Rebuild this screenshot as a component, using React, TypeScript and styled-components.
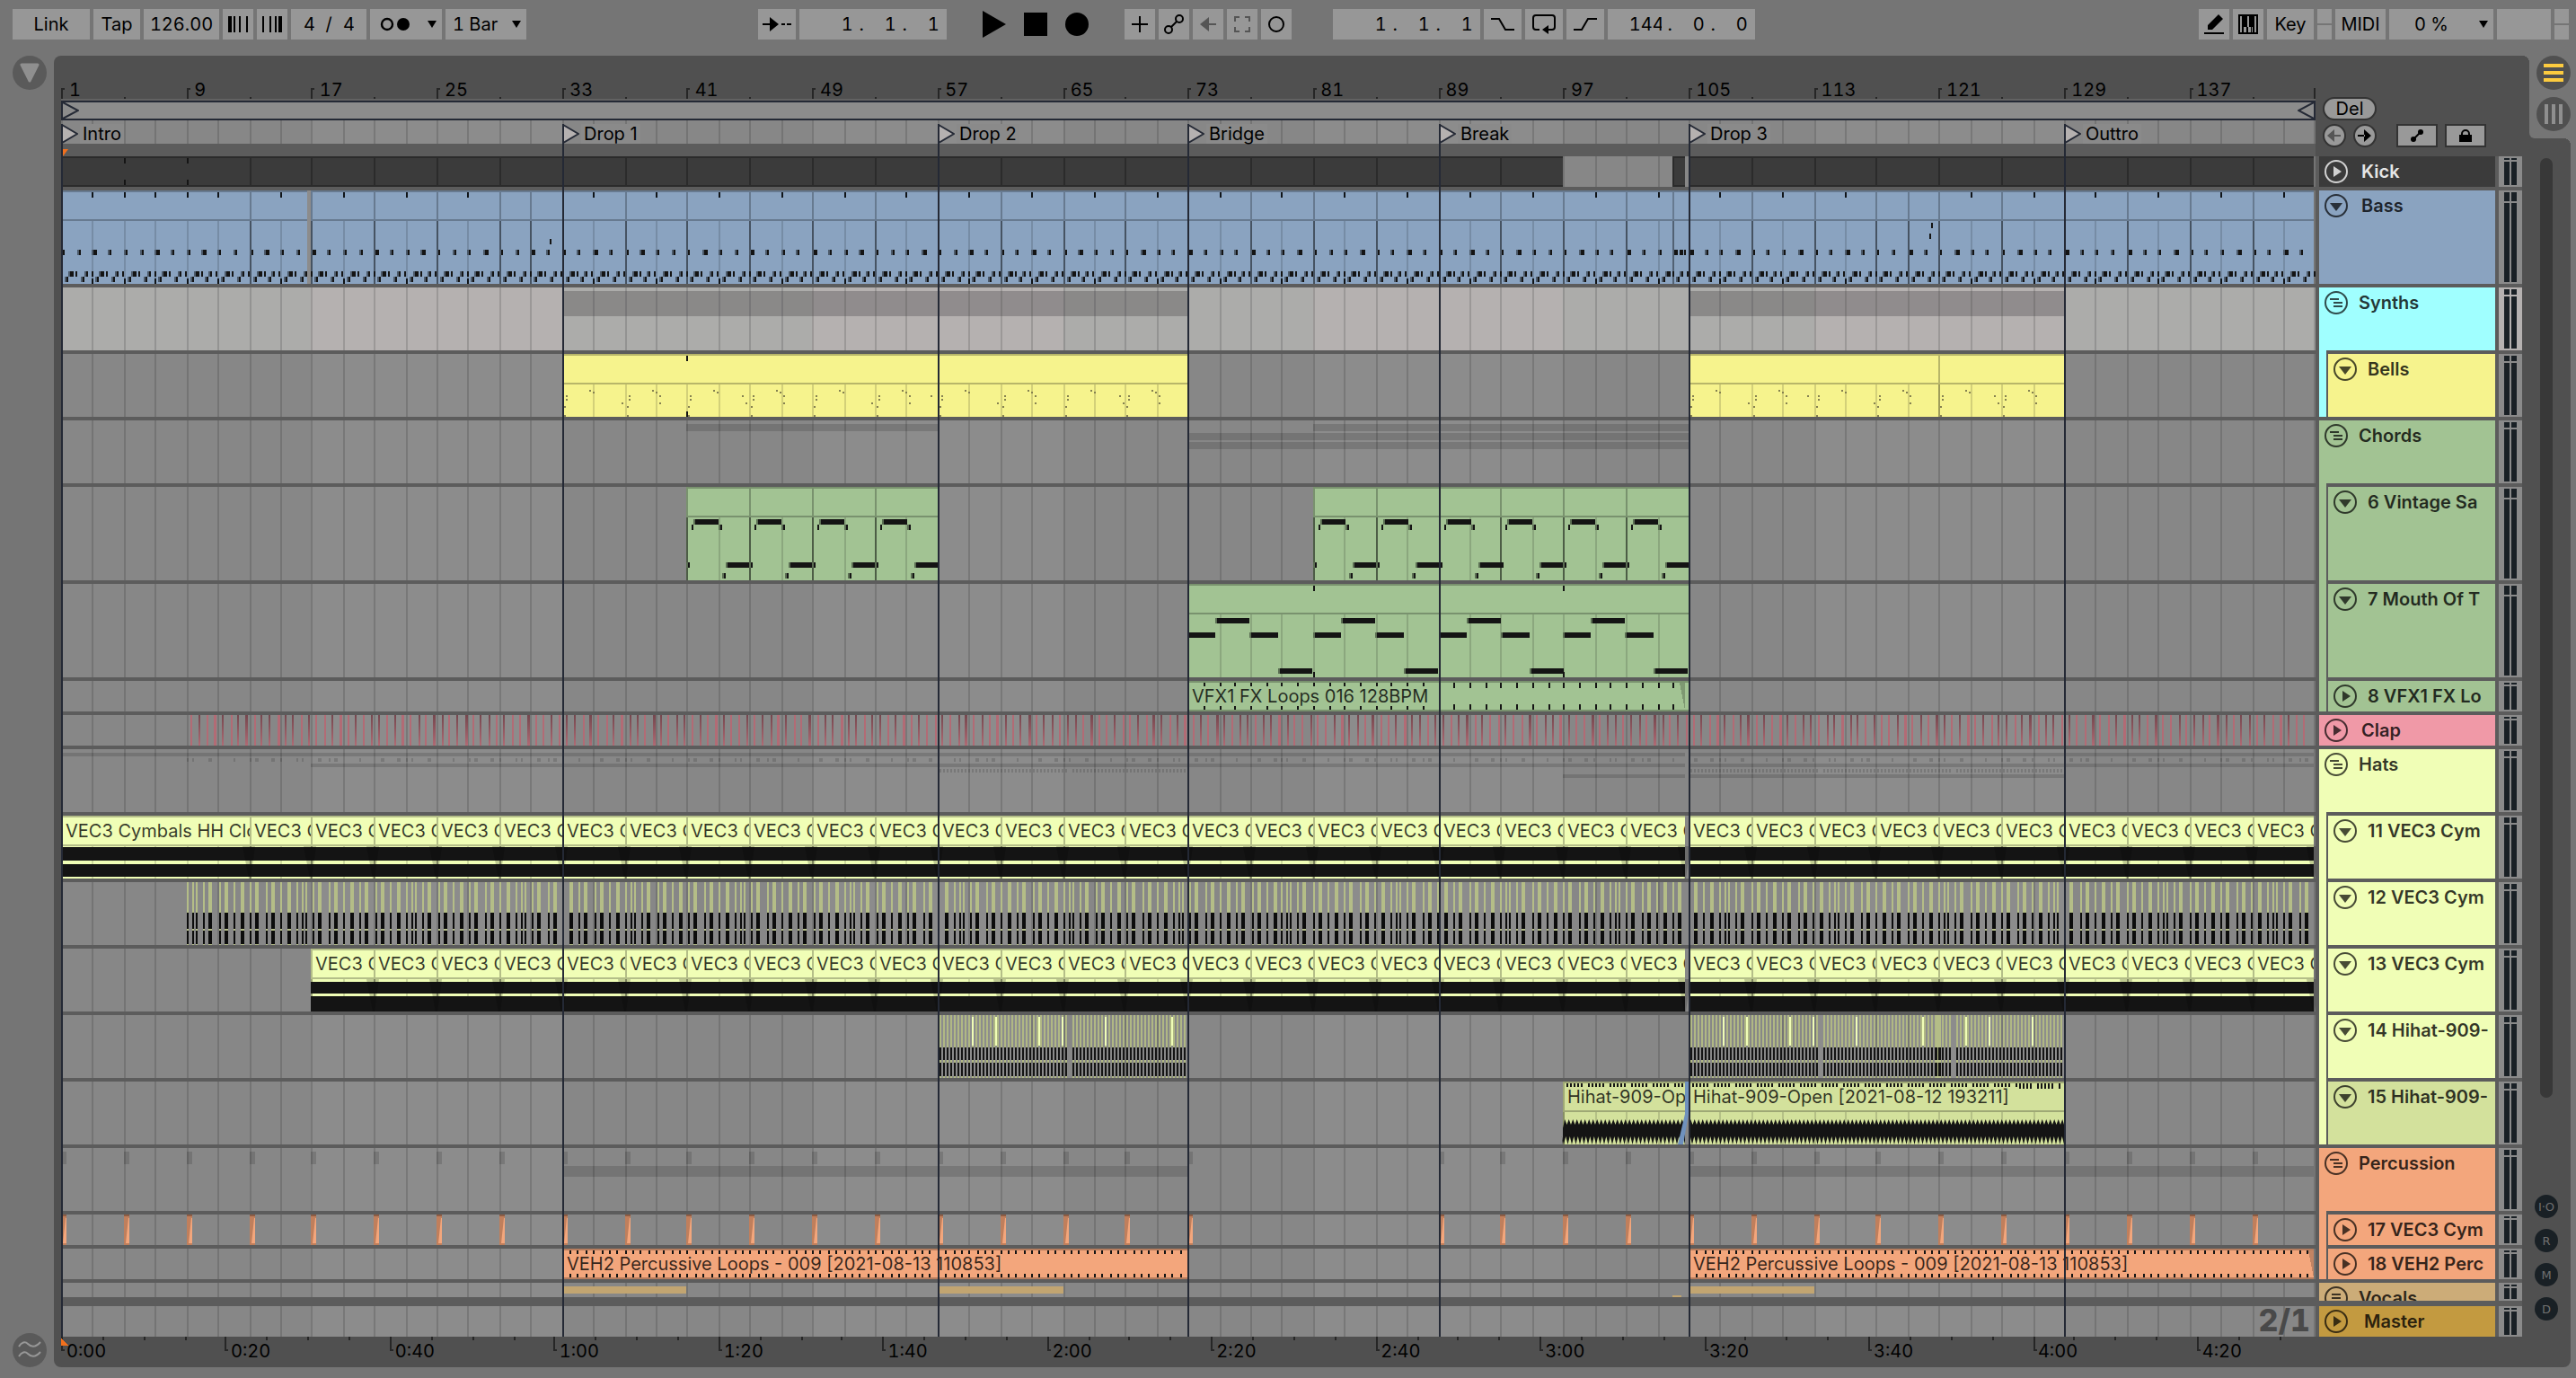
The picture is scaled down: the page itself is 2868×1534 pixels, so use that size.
import React from "react";
import styled, { createGlobalStyle, css } from "styled-components";

/* ---------- palette and metrics ---------- */

const C = {
  chrome: "#757575",
  control: "#979797",
  panel: "#505050",
  gap: "#5c5c5c",
  lane: "#878787",
  laneAlt: "#8c8c8c",
  navy: "#242935",
  ink: "#141414",
  blue: "#8aa3c0",
  cyan: "#a0ffff",
  yellow: "#f6f38d",
  green: "#a2c393",
  pink: "#f099a7",
  lime: "#f0feb6",
  olive: "#d3e19c",
  orange: "#f3a67c",
  tan: "#ccac78",
  gold: "#c39a40",
  dark: "#3b3b3b",
};

const FONT = `"Inter", "Liberation Sans", sans-serif`;
const LANE_W = 2510;
const BAR = 17.422;

/** Timeline x of a bar, on the two-pixel grid that the arrangement uses. */
const snap = (bar: number) => Math.round(((bar - 1) * BAR) / 2) * 2;
const pct = (units: number) => `${(units / LANE_W) * 100}%`;
const range = (from: number, to: number, step: number) => {
  const out: number[] = [];
  for (let v = from; v < to; v += step) out.push(v);
  return out;
};

const GlobalStyle = createGlobalStyle`
  *, *::before, *::after { box-sizing: border-box; }
  body { margin: 0; background: ${C.chrome}; font-family: ${FONT}; font-size: 20px; color: #000; }
  button, input, select { font: inherit; color: inherit; margin: 0; padding: 0; border: 0; border-radius: 0; background: none; }
  svg { display: block; }
`;

/* ---------- toolbar ---------- */

const Shell = styled.div`
  display: flex;
  flex-direction: column;
  min-height: 100vh;
  background: ${C.chrome};
`;

const Toolbar = styled.header`
  display: flex;
  align-items: center;
  padding: 10px 8px 18px 14px;
  font-variant-numeric: tabular-nums;
`;

const Group = styled.div<{ $gap?: number; $before?: number }>`
  display: flex;
  gap: ${(p) => p.$gap ?? 4}px;
  margin-left: ${(p) => p.$before ?? 0}px;
`;

const Spacer = styled.div<{ $grow: number }>`
  flex: ${(p) => p.$grow} 1 0;
`;

const box = css<{ $w: number }>`
  display: flex;
  align-items: center;
  justify-content: center;
  width: ${(p) => p.$w}px;
  height: 34px;
  background: ${C.control};
`;

const ToolButton = styled.button<{ $w: number; $dim?: boolean }>`
  ${box}
  color: ${(p) => (p.$dim ? "#555" : "#000")};
`;

const Transport = styled.button`
  display: flex;
  align-items: center;
  justify-content: center;
  width: 26px;
  height: 34px;
`;

const NumberInput = styled.input<{ $w: number }>`
  ${box}
  text-align: center;
`;

const Field = styled.div<{ $w: number; $end?: boolean }>`
  ${box}
  justify-content: ${(p) => (p.$end ? "flex-end" : "center")};
  padding: 0 8px;
`;

const Part = styled.input<{ $w: number }>`
  width: ${(p) => p.$w}px;
  text-align: right;
`;

const Dot = styled.span`
  width: 12px;
  text-align: right;
`;

const Slash = styled.span`
  width: 32px;
  text-align: center;
`;

const SelectBox = styled.label<{ $w: number }>`
  ${box}
  justify-content: flex-start;
  padding-right: 6px;
`;

const Select = styled.select<{ $indent: number }>`
  appearance: none;
  flex: 1;
  min-width: 0;
  height: 34px;
  padding-left: ${(p) => p.$indent}px;
`;

const Lamp = styled.div`
  display: flex;
  flex-direction: column;
  gap: 2px;
  & > i { width: 16px; height: 16px; background: ${C.control}; }
`;

const Down = () => (
  <svg width="10" height="8" viewBox="0 0 10 8"><path d="M0 0H10L5 8Z" /></svg>
);

const Position = ({ label, parts }: { label: string; parts: string[] }) => (
  <Field $w={164} $end>
    {parts.map((p, i) => (
      <React.Fragment key={i}>
        <Part $w={36} defaultValue={p} aria-label={`${label} ${i + 1}`} />
        {i < 2 && <Dot>.</Dot>}
      </React.Fragment>
    ))}
  </Field>
);

const stroke = { fill: "none", stroke: "currentColor", strokeWidth: 2 } as const;

const TopBar = () => (
  <Toolbar>
    <Group>
      <ToolButton $w={86}>Link</ToolButton>
      <ToolButton $w={52}>Tap</ToolButton>
      <NumberInput $w={84} defaultValue="126.00" aria-label="Tempo" />
      <ToolButton $w={34} aria-label="Nudge down">
        <svg width="22" height="18" shapeRendering="crispEdges"><path d="M0 0h4v18H0zM6 0h2v18H6zM12 0h2v18h-2zM20 0h2v18h-2z" /></svg>
      </ToolButton>
      <ToolButton $w={34} aria-label="Nudge up">
        <svg width="22" height="18" shapeRendering="crispEdges"><path d="M0 0h2v18H0zM8 0h2v18H8zM14 0h2v18h-2zM18 0h4v18h-4z" /></svg>
      </ToolButton>
      <Field $w={84}>
        <Part $w={12} defaultValue="4" aria-label="Beats" />
        <Slash>/</Slash>
        <Part $w={12} defaultValue="4" aria-label="Beat unit" />
      </Field>
      <ToolButton $w={80} aria-label="Metronome">
        <svg width="68" height="20" viewBox="0 0 68 20">
          <circle cx="13" cy="10" r="6" {...stroke} strokeWidth="2.4" />
          <circle cx="31" cy="10" r="7" />
          <path d="M58 6h10l-5 8z" />
        </svg>
      </ToolButton>
      <SelectBox $w={90}>
        <Select $indent={8} defaultValue="1 Bar" aria-label="Quantization"><option>1 Bar</option></Select>
        <Down />
      </SelectBox>
    </Group>

    <Spacer $grow={12} />

    <Group>
      <ToolButton $w={42} aria-label="Follow">
        <svg width="32" height="16" viewBox="0 0 32 16">
          <path d="M0 7h9v2H0zM8 0l10 8-10 8zM21 7h4v2h-4zM27 7h5v2h-5z" />
        </svg>
      </ToolButton>
      <Position label="Position" parts={["1", "1", "1"]} />
    </Group>
    <Group $gap={20} $before={40}>
      <Transport aria-label="Play"><svg width="26" height="30"><path d="M0 0L26 15L0 30Z" /></svg></Transport>
      <Transport aria-label="Stop"><svg width="26" height="26"><rect width="26" height="26" /></svg></Transport>
      <Transport aria-label="Record"><svg width="26" height="26"><circle cx="13" cy="13" r="13" /></svg></Transport>
    </Group>
    <Group $before={40}>
      <ToolButton $w={34} aria-label="Overdub">
        <svg width="18" height="18" {...stroke}><path d="M9 0v18M0 9h18" /></svg>
      </ToolButton>
      <ToolButton $w={34} aria-label="Automation arm">
        <svg width="22" height="24" viewBox="0 0 22 24" {...stroke}>
          <circle cx="5" cy="18" r="4" /><circle cx="17" cy="6" r="4" /><path d="M8 15l6-6" />
        </svg>
      </ToolButton>
      <ToolButton $w={34} $dim aria-label="Re-enable automation">
        <svg width="18" height="16" fill="currentColor"><path d="M0 8L10 0V16ZM8 7h10v2H8z" /></svg>
      </ToolButton>
      <ToolButton $w={34} $dim aria-label="Capture">
        <svg width="18" height="18" {...stroke}><path d="M1 6V1h5M12 1h5v5M17 12v5h-5M6 17H1v-5" /></svg>
      </ToolButton>
      <ToolButton $w={34} aria-label="Session record">
        <svg width="20" height="20" {...stroke}><circle cx="10" cy="10" r="8" /></svg>
      </ToolButton>
    </Group>
    <Group $before={46}>
      <Position label="Loop start" parts={["1", "1", "1"]} />
      <ToolButton $w={42} aria-label="Punch in">
        <svg width="26" height="16" {...stroke}><path d="M0 2h9l7 12h10" /></svg>
      </ToolButton>
      <ToolButton $w={42} aria-label="Loop">
        <svg width="26" height="24" viewBox="0 0 26 24">
          <path d="M8 18H4a3 3 0 0 1-3-3V5a3 3 0 0 1 3-3h18a3 3 0 0 1 3 3v10a3 3 0 0 1-3 3h-5" {...stroke} />
          <path d="M11 18l7-5v10z" />
        </svg>
      </ToolButton>
      <ToolButton $w={42} aria-label="Punch out">
        <svg width="26" height="16" {...stroke}><path d="M0 14h9l7-12h10" /></svg>
      </ToolButton>
      <Position label="Loop length" parts={["144", "0", "0"]} />
    </Group>

    <Spacer $grow={23} />

    <Group>
      <ToolButton $w={34} aria-label="Draw mode">
        <svg width="22" height="24" viewBox="0 0 22 24"><path d="M4 18V13L16 1l5 5L9 18zM0 21h22v2H0z" /></svg>
      </ToolButton>
      <ToolButton $w={34} aria-label="Computer MIDI keyboard">
        <svg width="22" height="22" shapeRendering="crispEdges">
          <path d="M0 0h22v22H0z" />
          <path fill={C.control} d="M2 2h2v18H2zM18 2h2v18h-2zM6 14h3v6H6zM8 14h1v6H8zM11 14h3v6h-3zM15 14h1v6h-1zM10 2h2v12h-2z" />
        </svg>
      </ToolButton>
      <ToolButton $w={52}>Key</ToolButton>
      <Lamp><i /><i /></Lamp>
      <ToolButton $w={56}>MIDI</ToolButton>
      <SelectBox $w={116}>
        <Select $indent={28} defaultValue="0 %" aria-label="CPU load"><option>0 %</option></Select>
        <Down />
      </SelectBox>
      <ToolButton $w={60} aria-label="Disk overload" />
      <Lamp><i /><i /></Lamp>
    </Group>
  </Toolbar>
);

/* ---------- lanes ---------- */

const Rail = styled.aside`
  display: flex;
  flex-direction: column;
  justify-content: space-between;
  flex: none;
  width: 60px;
  padding-left: 14px;
`;

const Round = styled.button<{ $bg: string; $size: number }>`
  display: flex;
  align-items: center;
  justify-content: center;
  width: ${(p) => p.$size}px;
  height: ${(p) => p.$size}px;
  border-radius: 50%;
  background: ${(p) => p.$bg};
`;

const Workspace = styled.main`
  display: flex;
  padding-right: 6px;
`;

const Panel = styled.section`
  position: relative;
  display: flex;
  flex: 1;
  min-width: 0;
  padding-left: 8px;
  border-radius: 8px;
  background: ${C.panel};
`;

const Arrangement = styled.div`
  position: relative;
  flex: 1;
  min-width: 0;
  overflow: hidden;
`;

const Ruler = styled.div`
  position: relative;
  display: flex;
  height: 50px;
  padding: 26px 2px 0 0;
  border-bottom: 2px solid #626262;
  font-variant-numeric: tabular-nums;
`;

const Ticks = styled.svg`
  position: absolute;
  left: 0;
  bottom: 0;
  width: 100%;
`;

const RulerLabel = styled.span`
  flex: 1 1 0;
  padding-left: 9px;
  line-height: 24px;
`;

const LoopBrace = styled.div`
  display: flex;
  justify-content: space-between;
  height: 22px;
  border: 2px solid ${C.navy};
  background: ${C.laneAlt};
`;

const LocatorStrip = styled.div`
  position: relative;
  height: 26px;
  background: ${C.lane};
`;

const Scrub = styled.div`
  height: 14px;
  padding: 6px 0 0 2px;
  background: ${C.gap};
`;

const Locator = styled.button`
  position: absolute;
  top: 4px;
  display: flex;
  align-items: center;
  height: 22px;
`;

const LocatorName = styled.span`
  margin-left: 2px;
  padding: 0 3px;
  line-height: 22px;
  background: #8a8a8a;
`;

const LocatorLine = styled.i`
  position: absolute;
  top: 76px;
  bottom: 34px;
  width: 2px;
  background: ${C.navy};
  pointer-events: none;
`;

const Lanes = styled.div`
  display: flex;
  flex-direction: column;
  gap: 4px;
  background: ${C.gap};
`;

const LaneBox = styled.div<{ $h: number; $before?: number }>`
  position: relative;
  height: ${(p) => p.$h}px;
  margin-top: ${(p) => p.$before ?? 0}px;
  overflow: hidden;
`;

const Layer = styled.svg`
  position: absolute;
  inset: 0;
  width: 100%;
  height: 100%;
`;

const ClipBox = styled.div<{ $color: string; $slim?: boolean; $edge: string }>`
  position: absolute;
  top: 0;
  bottom: 0;
  overflow: hidden;
  border: 0 solid ${(p) => p.$edge};
  border-top-width: 2px;
  border-left-width: 2px;
  border-bottom-width: ${(p) => (p.$slim ? 2 : 0)}px;
  background: ${(p) => p.$color};
`;

const ClipTitle = styled.div<{ $edge: string; $slim?: boolean }>`
  height: 32px;
  padding-left: 3px;
  border-bottom: ${(p) => (p.$slim ? 0 : 2)}px solid ${(p) => p.$edge};
  line-height: 31px;
  overflow: hidden;
  white-space: nowrap;
  color: rgba(0, 0, 0, 0.78);
`;

const Overview = styled.span`
  position: absolute;
  right: 6px;
  top: 0;
  line-height: 32px;
  font-size: 34px;
  font-weight: 800;
  font-variant-numeric: tabular-nums;
  color: #494949;
`;

type Clip = { from: number; to: number; name?: string };
type LaneSpec = {
  height: number;
  before?: number;
  light?: boolean;
  color?: string;
  edge?: string;
  slim?: boolean;
  clips?: Clip[];
  draw?: React.ReactNode;
  note?: string;
};

const Bands = ({ light }: { light?: boolean }) => (
  <Layer viewBox={`0 0 ${LANE_W} 10`} preserveAspectRatio="none" shapeRendering="crispEdges" aria-hidden>
    {range(1, 145, 16).map((b, i) => (
      <rect key={b} x={snap(b)} width={LANE_W - snap(b)} height="10"
        fill={light ? (i % 2 ? "#b5b1b0" : "#acacaa") : i % 2 ? C.laneAlt : C.lane} />
    ))}
  </Layer>
);

const GRID = range(1, 146, 2);

const Lane = ({ spec }: { spec: LaneSpec }) => {
  const { height, clips = [], slim } = spec;
  const edge = spec.edge ?? "rgba(0,0,0,0.25)";
  return (
    <LaneBox $h={height} $before={spec.before}>
      <Bands light={spec.light} />
      {clips.map((c, i) => (
        <ClipBox key={i} $color={spec.color!} $slim={slim} $edge={edge}
          style={{ left: pct(snap(c.from)), width: pct(snap(c.to) - snap(c.from)) }}>
          <ClipTitle $edge={edge} $slim={slim}>{c.name}</ClipTitle>
        </ClipBox>
      ))}
      <Layer viewBox={`0 0 ${LANE_W} ${height}`} preserveAspectRatio="none" shapeRendering="crispEdges" aria-hidden>
        {GRID.map((b) => {
          const inside = clips.some((c) => b >= c.from && b < c.to);
          if (inside && slim) return null;
          return <rect key={b} x={snap(b)} y={inside ? 34 : 0} width="2" height={height} fill="rgba(0,0,0,0.14)" />;
        })}
        {spec.draw}
      </Layer>
      {spec.note && <Overview>{spec.note}</Overview>}
    </LaneBox>
  );
};

/* ---------- lane contents ---------- */

const SHADE = "rgba(0,0,0,0.14)";

type R = [x: number, y: number, w: number, h: number];
const Rects = ({ items, fill }: { items: R[]; fill: string }) => (
  <path fill={fill} d={items.map(([x, y, w, h]) => `M${x} ${y}h${w}v${h}h${-w}z`).join("")} />
);

const split = (starts: number[], end: number): Clip[] =>
  starts.map((s, i) => ({ from: s, to: starts[i + 1] ?? end }));

/* Kick */
const kickClips: Clip[] = [
  { from: 1, to: 13 },
  ...split(range(13, 97, 4), 97),
  { from: 104, to: 104.8 },
  ...split(range(105, 145, 4), 145),
];
const kickDraw = (
  <Rects fill="#151515" items={[5, 9].flatMap((b): R[] => [[snap(b), 2, 2, 6], [snap(b), 26, 2, 6]])} />
);

/* Bass */
const bassStarts = [1, ...range(13, 29, 4), 29, 31, ...range(33, 104, 4), 104, ...range(105, 119, 4), 119, ...range(121, 145, 4)];
const bassTicks = [3, 5, 7, 9, 11, ...range(15, 145, 4)].filter((b) => b !== 31 && b !== 119);
const bassNotes: R[] = [];
const bassShadow: R[] = [];
for (let b = 0; b < 144; b++) {
  const x = Math.round((b * BAR) / 2) * 2 + 2;
  const wide = b % 7 === 2 || b % 7 === 6;
  if (b !== 103) {
    bassShadow.push([x - 2, 66, 2, 6]);
    bassNotes.push([x, 66, wide ? 4 : 2, 6]);
  }
  bassShadow.push([x + 2, 96, 2, 6], [x + 6, 90, 2, 6]);
  bassNotes.push([x + 4, 96, 2, 6], [x + 8, 90, b % 2 ? 2 : 4, 6], [x + 14, 90, 2, 6]);
}
bassNotes.push([544, 54, 2, 6], [2080, 48, 2, 6], [2082, 36, 2, 6]);
bassNotes.push([1796, 66, 4, 6], [1802, 66, 4, 6], [1807, 66, 2, 6]);
const bassDraw = (
  <>
    <Rects fill={C.laneAlt} items={[[274, 0, 4, 104]]} />
    <Rects fill="rgba(0,0,0,0.2)" items={bassStarts.map((b): R => [snap(b), 34, 2, 70])} />
    <Rects fill="#4d5b6b" items={bassShadow} />
    <Rects fill={C.ink} items={bassNotes} />
    <Rects fill="#101418" items={bassTicks.flatMap((b): R[] => [[snap(b), 2, 2, 6], [snap(b), 98, 2, 6]])} />
  </>
);

/* Bells */
const bellNotes: R[] = [];
[...range(33, 73, 4), ...range(105, 129, 4)].forEach((b, i) => {
  const x = snap(b);
  const pts = [[2, 58], [2, 68], [4, 46], [4, 50], [30, 40], [34, 42], ...(i % 2 ? [[38, 46], [38, 54]] : [[66, 54]])];
  if (i % 3 === 2) pts.push([62, 46]);
  pts.forEach(([dx, y]) => bellNotes.push([x + dx, y, 2, 2]));
});
const bellDraw = (
  <>
    <Rects fill="#858150" items={bellNotes} />
    <Rects fill={C.ink} items={[[snap(41), 2, 2, 6], [snap(41), 64, 2, 6]]} />
  </>
);

/* Chords */
const vintageStarts = [...range(41, 57, 4), ...range(81, 105, 4)];
const vintageNotes: R[] = [];
const vintageShadow: R[] = [];
vintageStarts.forEach((b) => {
  const x = snap(b);
  vintageShadow.push([x + 8, 36, 2, 6], [x + 36, 42, 2, 6], [x + 44, 84, 2, 6], [x + 40, 96, 2, 6], [x, 84, 4, 6]);
  vintageNotes.push([x + 10, 36, 26, 6], [x + 6, 42, 2, 6], [x + 38, 42, 2, 6], [x + 46, 84, 24, 6], [x + 42, 96, 2, 6], [x + 2, 84, 2, 6]);
});
const vintageDraw = (
  <>
    <Rects fill="rgba(0,0,0,0.25)" items={vintageStarts.map((b): R => [snap(b), 34, 2, 70])} />
    <Rects fill="#5b6e53" items={vintageShadow} />
    <Rects fill={C.ink} items={vintageNotes} />
  </>
);

const mouthNotes: R[] = [];
const mouthShadow: R[] = [];
range(73, 105, 8).forEach((b) => {
  const x = snap(b);
  mouthNotes.push([x + 2, 54, 29, 6], [x + 33, 38, 36, 6], [x + 71, 54, 30, 6], [x + 103, 94, 36, 6]);
  mouthShadow.push([x, 54, 2, 6], [x + 31, 38, 2, 6], [x + 69, 54, 2, 6], [x + 101, 94, 2, 6]);
});
const mouthDraw = (
  <>
    <Rects fill="#5b6e53" items={mouthShadow} />
    <Rects fill={C.ink} items={mouthNotes} />
    <Rects fill={C.ink} items={[81, 97].flatMap((b): R[] => [[snap(b), 2, 2, 6], [snap(b), 98, 2, 6]])} />
  </>
);

const fxDraw = (
  <>
    <Rects fill={C.ink} items={range(74, 105, 1).filter((b) => b !== 89).flatMap((b): R[] => {
      const h = b < 89 ? 4 : 6;
      return [[snap(b), 2, 2, h], [snap(b), 32 - h, 2, h]];
    })} />
    <path d="M1802 2L1808 32V2Z" fill="rgba(0,0,0,0.22)" />
  </>
);

/* Clap */
const clapLight: R[] = [];
const clapDark: R[] = [];
const CLAP = "LDLLDLDDLDDLDDLDLLDLLDLDD";
for (let i = 0; i < 271; i++) {
  const x = 144 + i * (BAR / 2) + (i % 3 === 2 ? 1 : 0);
  const r: R = [Math.round(x), 0, i % 8 === 3 || i % 12 === 7 ? 3 : 2, 34];
  (CLAP[i % CLAP.length] === "L" ? clapLight : clapDark).push(r);
}
const clapDraw = (
  <>
    <defs>
      <linearGradient id="clap" gradientUnits="userSpaceOnUse" x1="0" y1="0" x2="0" y2="34">
        <stop offset="0" stopColor="#74474e" />
        <stop offset="1" stopColor="#b06a74" />
      </linearGradient>
    </defs>
    <Rects fill="#b26b75" items={clapLight} />
    <Rects fill="url(#clap)" items={clapDark} />
  </>
);

/* Hats: the hit pattern repeats every fourteen bars */
const HITS: [number, boolean][] = [
  [0, false], [6, false], [10, false], [18, false], [24, true], [36, false], [42, true], [52, false], [60, true],
  [70, false], [76, true], [88, false], [94, true], [104, false], [112, true], [122, false], [128, false], [132, false],
  [140, false], [146, true], [158, false], [164, true], [174, false], [182, true], [192, false], [198, true],
  [210, false], [216, true], [226, false], [234, true],
];
const hits: { x: number; w: number; i: number }[] = [];
range(9, 145, 14).forEach((b) => HITS.forEach(([dx, wide], i) => {
  const x = snap(b) + dx;
  if (x < snap(145) - 6) hits.push({ x, w: wide ? 4 : 2, i });
}));
const openSpans = [[57, 73], [105, 129]];
const openStripes = openSpans.flatMap(([a, b]) =>
  range(snap(a) + 2, snap(b) - 1, 4).filter((x) => (x - snap(a)) % 74 < 71));
const hatsDraw = (
  <>
    <Rects fill={SHADE} items={[[0, 4, snap(104.8), 4], [snap(105), 4, 2508 - snap(105), 4], [snap(17), 16, snap(104.8) - snap(17), 4], [snap(105), 16, 2508 - snap(105), 4]]} />
    <Rects fill={SHADE} items={hits.filter((h) => [0, 1, 4, 7, 9, 10, 12, 13, 15, 16, 19].includes(h.i % 20)).map((h): R => [h.x, 10, h.w, 4])} />
    <Rects fill={SHADE} items={openStripes.map((x): R => [x, 22, 2, 4])} />
    <Rects fill={SHADE} items={[[snap(97), 28, snap(104.8) - snap(97), 4], [snap(105), 28, snap(129) - snap(105), 4]]} />
  </>
);

const cymbalClips = (first: Clip[], from: number): Clip[] => [
  ...first,
  ...split(range(from, 105, 4), 104.8),
  ...split(range(105, 145, 4), 145),
].map((c) => ({ ...c, name: c.to - c.from > 4 ? "VEC3 Cymbals HH Clo" : "VEC3 C" }));

const Wave = ({ clips, bands }: { clips: Clip[]; bands: [number, number][] }) => (
  <>
    <Rects fill={C.ink} items={clips.flatMap((c) => bands.map(([y, h]): R => [snap(c.from), y, snap(c.to) - snap(c.from), h]))} />
    <path fill="rgba(0,0,0,0.2)" shapeRendering="auto"
      d={clips.map((c) => `M${snap(c.to) - 8} 34H${snap(c.to) + 6}L${snap(c.to) + 1} 70h-2z`).join("")} />
  </>
);
const cymbal11 = cymbalClips([{ from: 1, to: 13 }], 13);
const cymbal13 = cymbalClips([], 17);

const hats12 = (
  <>
    <Rects fill="#b4bd87" items={hits.map((h): R => [h.x, 0, h.w, 70])} />
    <Rects fill="#0c0c0c" items={hits.flatMap((h): R[] => [[h.x, 34, h.w, 18], [h.x, 54, h.w, 15]])} />
  </>
);

const brightAt = [38, 64, 112, 138, 186, 260, 308, 334, 382];
const bright = openSpans.flatMap(([a, b]) => brightAt.filter((d) => d < snap(b) - snap(a)).map((d) => snap(a) + d));
const hats14 = (
  <>
    <Rects fill="#b0b884" items={openStripes.map((x): R => [x, 0, 2, 70])} />
    <Rects fill="#b4bd87" items={[[snap(105) + 275, 0, 6, 70]]} />
    <Rects fill={C.ink} items={[...openStripes, snap(105) + 275, snap(105) + 279].flatMap((x): R[] => [[x, 36, 2, 14], [x, 53, 2, 15]])} />
    <Rects fill={C.lime} items={bright.map((x): R => [x, 2, 2, 32])} />
  </>
);

const open15: Clip[] = [
  { from: 97, to: 104.8, name: "Hihat-909-Op" },
  { from: 105, to: 129, name: "Hihat-909-Open [2021-08-12 193211]" },
];
const teeth = (a: number, b: number) => {
  let d = `M${a} 52`;
  for (let x = a; x < b; x += 4.5) d += `L${x + 2.2} 42L${Math.min(x + 4.5, b)} 48`;
  d += `V70`;
  for (let x = b; x > a; x -= 4.5) d += `L${x - 2.2} 61L${Math.max(x - 4.5, a)} 70`;
  return d + "Z";
};
const hats15 = (
  <>
    <Rects fill={C.ink} items={open15.flatMap((c) => range(snap(c.from) + 4, snap(c.to) - 2, 4)
      .filter((_, i) => i % 6 !== 5).map((x): R => [x, 2, 2, x > snap(126) ? 6 : 4]))} />
    {open15.map((c) => (
      <path key={c.from} d={teeth(snap(c.from), snap(c.to))} fill={C.ink} shapeRendering="auto" />
    ))}
    <path d="M1808 0h4V36L1806 70h-6L1808 36Z" fill="#6f91bd" shapeRendering="auto" />
  </>
);

/* Percussion */
const percBars = [...range(1, 74, 4), ...range(89, 145, 4)];
const percDraw = (
  <>
    <Rects fill={SHADE} items={percBars.map((b): R => [snap(b), 4, 6, 14])} />
    <Rects fill={SHADE} items={[[snap(33), 20, snap(73) - snap(33), 12], [snap(105), 20, snap(145) - snap(105), 12]]} />
  </>
);
const perc17 = (
  <>
    <Rects fill="#c07f5c" items={percBars.map((b): R => [snap(b), 0, 6, 34])} />
    <path fill={C.orange} shapeRendering="auto" d={percBars.map((b) => `M${snap(b) + 5} 4h1v28h-4z`).join("")} />
    <Rects fill="#8d5d44" items={percBars.map((b): R => [snap(b), 0, 6, 2])} />
  </>
);
const percClips: Clip[] = [
  { from: 33, to: 73, name: "VEH2 Percussive Loops - 009 [2021-08-13 110853]" },
  { from: 105, to: 145, name: "VEH2 Percussive Loops - 009 [2021-08-13 110853]" },
];
const perc18 = (
  <>
    <Rects fill={C.ink} items={percClips.flatMap((c) => range(c.from + 0.5, c.to, 0.5)
      .flatMap((b): R[] => [[snap(b), 2, 2, 4], [snap(b), 28, 2, 4]]))} />
    <path d="M2502 2L2508 32V2Z" fill="rgba(0,0,0,0.2)" />
  </>
);
const vocalsDraw = (
  <Rects fill="#c2a571" items={[...[33, 57, 105].map((b): R => [snap(b), 4, snap(b + 8) - snap(b), 8]), [1794, 14, 10, 2]]} />
);

const LANES: LaneSpec[] = [
  { height: 34, color: C.dark, edge: "#2b2b2b", slim: true, clips: kickClips, draw: kickDraw },
  { height: 104, color: C.blue, clips: split(bassStarts, 145), draw: bassDraw },
  { height: 70, light: true, draw: <Rects fill="rgba(60,55,60,0.3)" items={[[snap(33), 4, snap(73) - snap(33), 28], [snap(105), 4, snap(129) - snap(105), 28]]} /> },
  { height: 70, color: C.yellow, clips: [{ from: 33, to: 73 }, { from: 105, to: 121 }, { from: 121, to: 129 }], draw: bellDraw },
  { height: 70, draw: <Rects fill={SHADE} items={[
    [snap(41), 4, snap(57) - snap(41), 8], [snap(81), 4, snap(105) - snap(81), 8],
    [snap(73), 14, snap(105) - snap(73), 8], [snap(73), 24, snap(105) - snap(73), 8]]} /> },
  { height: 104, color: C.green, clips: [...split(range(41, 57, 4), 57), ...split(range(81, 105, 4), 105)], draw: vintageDraw },
  { height: 104, color: C.green, clips: [{ from: 73, to: 105 }], draw: mouthDraw },
  { height: 34, color: C.green, slim: true, clips: [{ from: 73, to: 105, name: "VFX1 FX Loops 016 128BPM" }], draw: fxDraw },
  { height: 34, draw: clapDraw },
  { height: 70, draw: hatsDraw },
  { height: 70, color: C.lime, clips: cymbal11, draw: <Wave clips={cymbal11} bands={[[35, 15], [54, 14]]} /> },
  { height: 70, draw: hats12 },
  { height: 70, color: C.lime, clips: cymbal13, draw: <Wave clips={cymbal13} bands={[[37, 13], [53, 17]]} /> },
  { height: 70, draw: hats14 },
  { height: 70, color: C.olive, clips: open15, draw: hats15 },
  { height: 70, draw: percDraw },
  { height: 34, draw: perc17 },
  { height: 34, color: C.orange, slim: true, clips: percClips, draw: perc18 },
  { height: 16, draw: vocalsDraw },
  { height: 34, before: 6, note: "2/1" },
];

const LOCATORS: [number, string][] = [
  [1, "Intro"], [33, "Drop 1"], [57, "Drop 2"], [73, "Bridge"], [89, "Break"], [105, "Drop 3"], [129, "Outtro"],
];

/* ---------- time ruler ---------- */

const TimeRuler = styled.div`
  position: relative;
  display: flex;
  height: 34px;
  padding-top: 4px;
  overflow: hidden;
  font-variant-numeric: tabular-nums;
`;

const TimeLabel = styled.time`
  flex: none;
  width: 7.2875%;
  padding-left: 6px;
  line-height: 24px;
`;

const TIMES = range(0, 14, 1).map((i) => `${Math.floor(i / 3)}:${["00", "20", "40"][i % 3]}`);

/* ---------- track headers ---------- */

const Side = styled.div`
  flex: none;
  width: 230px;
`;

const SideControls = styled.div`
  display: flex;
  flex-direction: column;
  gap: 4px;
  height: 112px;
  padding: 46px 0 0 8px;
`;

const SideRow = styled.div`
  display: flex;
  gap: 8px;
`;

const Pill = styled.button<{ $w: number; $square?: boolean; $before?: number }>`
  display: flex;
  align-items: center;
  justify-content: center;
  width: ${(p) => p.$w}px;
  height: 26px;
  margin-left: ${(p) => p.$before ?? 0}px;
  border: 2px solid #333;
  border-radius: ${(p) => (p.$square ? 0 : 13)}px;
  background: #999;
  line-height: 22px;
`;

const SideBody = styled.div`
  display: flex;
  gap: 4px;
  padding-left: 4px;
  background: ${C.gap};
`;

const Column = styled.div<{ $w: number }>`
  display: flex;
  flex-direction: column;
  gap: 4px;
  width: ${(p) => p.$w}px;
`;

const GroupBox = styled.div<{ $color: string }>`
  background: ${(p) => p.$color};
`;

const Children = styled.div`
  display: flex;
  flex-direction: column;
  gap: 4px;
  margin-left: 8px;
  padding: 4px 0 0 2px;
  background: ${C.gap};
`;

const Head = styled.div<{ $h: number; $color: string; $ink?: string; $before?: number }>`
  display: flex;
  align-items: flex-start;
  gap: 12px;
  height: ${(p) => p.$h}px;
  margin-top: ${(p) => p.$before ?? 0}px;
  padding: 4px 0 0 6px;
  overflow: hidden;
  white-space: nowrap;
  font-weight: 600;
  line-height: 26px;
  background: ${(p) => p.$color};
  color: ${(p) => p.$ink ?? "rgba(0,0,0,0.8)"};
`;

const Fold = styled.button`
  flex: none;
  width: 26px;
  height: 26px;
  opacity: 0.88;
`;

const HeadName = styled.span<{ $indent: number }>`
  padding-left: ${(p) => p.$indent}px;
`;

const MeterBox = styled.div<{ $h: number; $lit?: boolean; $before?: number }>`
  display: grid;
  grid-template: ${(p) => (p.$h > 100 ? 10 : p.$h > 60 ? 6 : 2)}px 1fr / 6px 6px;
  gap: 2px;
  height: ${(p) => p.$h}px;
  margin-top: ${(p) => p.$before ?? 0}px;
  padding: 2px 6px;
  background: ${(p) => (p.$lit ? "#b5b1b0" : "#8a8a8a")};
  & > i { background: #192025; }
`;

type Kind = "play" | "open" | "group" | "bars";
const glyphs: Record<Kind, React.ReactNode> = {
  play: <path d="M10 7v12l9-6z" fill="currentColor" />,
  open: <path d="M6 10h14l-7 9z" fill="currentColor" />,
  group: <path d="M6 9h10M10 13h10M10 17h10" stroke="currentColor" strokeWidth="2" />,
  bars: <path d="M8 9h10M8 13h10M8 17h10" stroke="currentColor" strokeWidth="2" />,
};

type Track = { name: string; h: number; color: string; kind: Kind; indent?: number; ink?: string; before?: number };
const TrackHead = ({ t }: { t: Track }) => (
  <Head $h={t.h} $color={t.color} $ink={t.ink} $before={t.before}>
    <Fold aria-label={`Fold ${t.name}`}>
      <svg width="26" height="26"><circle cx="13" cy="13" r="12" fill="none" stroke="currentColor" strokeWidth="2" />{glyphs[t.kind]}</svg>
    </Fold>
    <HeadName $indent={t.indent ?? 0}>{t.name}</HeadName>
  </Head>
);

const HEADS: (Track & { children?: Track[] })[] = [
  { name: "Kick", h: 34, color: C.dark, kind: "play", ink: "#e6e6e6", indent: 3 },
  { name: "Bass", h: 104, color: C.blue, kind: "open", indent: 3 },
  { name: "Synths", h: 70, color: C.cyan, kind: "group", children: [
    { name: "Bells", h: 70, color: C.yellow, kind: "open" },
  ] },
  { name: "Chords", h: 70, color: C.green, kind: "group", children: [
    { name: "6 Vintage Sa", h: 104, color: C.green, kind: "open" },
    { name: "7 Mouth Of T", h: 104, color: C.green, kind: "open" },
    { name: "8 VFX1 FX Lo", h: 34, color: C.green, kind: "play" },
  ] },
  { name: "Clap", h: 34, color: C.pink, kind: "play", indent: 3 },
  { name: "Hats", h: 70, color: C.lime, kind: "group", children: [
    { name: "11 VEC3 Cym", h: 70, color: C.lime, kind: "open" },
    { name: "12 VEC3 Cym", h: 70, color: C.lime, kind: "open" },
    { name: "13 VEC3 Cym", h: 70, color: C.lime, kind: "open" },
    { name: "14 Hihat-909-", h: 70, color: C.lime, kind: "open" },
    { name: "15 Hihat-909-", h: 70, color: C.olive, kind: "open" },
  ] },
  { name: "Percussion", h: 70, color: C.orange, kind: "group", children: [
    { name: "17 VEC3 Cym", h: 34, color: C.orange, kind: "play" },
    { name: "18 VEH2 Perc", h: 34, color: C.orange, kind: "play" },
  ] },
  { name: "Vocals", h: 20, color: C.tan, kind: "bars" },
  { name: "Master", h: 34, color: C.gold, kind: "play", indent: 6, before: 2 },
];

/* ---------- right edge ---------- */

const Edge = styled.div`
  display: flex;
  flex-direction: column;
  flex: none;
  width: 54px;
  padding: 114px 0 52px;
  align-items: center;
  gap: 12px;
`;

const ScrollThumb = styled.div`
  width: 14px;
  height: 1046px;
  margin-bottom: auto;
  border-radius: 7px;
  background: #383838;
`;

const Letter = styled(Round)`
  font-family: "DejaVu Sans", sans-serif;
  font-size: 13px;
  color: #707070;
`;

const Notch = styled.div`
  position: absolute;
  top: 0;
  right: 0;
  display: flex;
  flex-direction: column;
  align-items: flex-end;
  gap: 8px;
  width: 46px;
  height: 92px;
  border-bottom-left-radius: 6px;
  background: ${C.chrome};
  &::before, &::after {
    content: "";
    position: absolute;
    width: 8px;
    height: 8px;
    background: radial-gradient(circle at 0 100%, ${C.panel} 8px, ${C.chrome} 8px);
  }
  &::before { left: -8px; top: 0; }
  &::after { right: 0; bottom: -8px; }
`;

/* ---------- page ---------- */

export default function App() {
  const flat = HEADS.flatMap((t) => [t, ...(t.children ?? [])]);
  return (
    <Shell>
      <GlobalStyle />
      <TopBar />
      <Workspace>
        <Rail>
          <Round $size={38} $bg="#5a5a5a" aria-label="Show browser">
            <svg width="22" height="24" viewBox="0 0 22 24"><path d="M2 3H20L11 21Z" fill="#8f8f8f" stroke="#8f8f8f" strokeWidth="3" strokeLinejoin="round" /></svg>
          </Round>
          <Round $size={38} $bg="#5a5a5a" aria-label="Groove pool">
            <svg width="26" height="22" viewBox="0 0 26 22" fill="none" stroke="#979797" strokeWidth="2">
              <path d="M1 7C4 2 8 1 11 4S19 9 25 2M1 18c3-5 7-6 10-3s8 5 14-2" />
            </svg>
          </Round>
        </Rail>
        <Panel>
          <Arrangement>
            <Ruler>
              <Ticks height="12" viewBox={`0 0 ${LANE_W} 12`} preserveAspectRatio="none" shapeRendering="crispEdges" aria-hidden>
                <Rects fill="#262626" items={[
                  ...range(1, 146, 8).flatMap((b): R[] => [[snap(b), 0, 2, 12], [snap(b), 0, 4, 2]]),
                  ...range(5, 145, 8).map((b): R => [snap(b), 10, 2, 2]),
                ]} />
              </Ticks>
              {range(1, 145, 8).map((b) => <RulerLabel key={b}>{b}</RulerLabel>)}
            </Ruler>
            <LoopBrace>
              <svg width="18" height="18"><path d="M0 0L17 9L0 18" {...stroke} stroke={C.navy} /></svg>
              <svg width="18" height="18"><path d="M18 0L1 9L18 18" {...stroke} stroke={C.navy} /></svg>
            </LoopBrace>
            <LocatorStrip>
              <Bands />
              <Layer viewBox={`0 0 ${LANE_W} 26`} preserveAspectRatio="none" shapeRendering="crispEdges" aria-hidden>
                <Rects fill={SHADE} items={GRID.map((b): R => [snap(b), 0, 2, 26])} />
              </Layer>
              {LOCATORS.map(([b, name]) => (
                <Locator key={name} style={{ left: pct(snap(b)) }}>
                  <svg width="19" height="22"><path d="M1 1L18 11L1 21Z" fill="#b5b1b0" stroke={C.navy} strokeWidth="2" /></svg>
                  <LocatorName>{name}</LocatorName>
                </Locator>
              ))}
            </LocatorStrip>
            <Scrub><svg width="6" height="8"><path d="M0 0H6L0 8Z" fill="#f2701d" /></svg></Scrub>
            <Lanes>
              {LANES.map((spec, i) => <Lane key={i} spec={spec} />)}
            </Lanes>
            <TimeRuler>
              <Layer viewBox={`0 0 ${LANE_W} 34`} preserveAspectRatio="none" shapeRendering="crispEdges" aria-hidden>
                <Rects fill="#262626" items={range(0, 55, 1).flatMap((i): R[] => {
                  const x = Math.round((i * 45.73) / 2) * 2;
                  return i % 4 ? [[x, 0, 2, 4]] : [[x, 0, 2, 16], [x, 14, 4, 2]];
                })} />
                <path d="M0 2V10H8Z" fill="#f2701d" />
              </Layer>
              {TIMES.map((t) => <TimeLabel key={t}>{t}</TimeLabel>)}
            </TimeRuler>
            {LOCATORS.map(([b]) => <LocatorLine key={b} style={{ left: pct(snap(b)) }} />)}
          </Arrangement>

          <Side>
            <SideControls>
              <Pill $w={60}>Del</Pill>
              <SideRow>
                <Pill $w={26} aria-label="Previous locator">
                  <svg width="16" height="14" fill="#555"><path d="M0 7L8 0V14ZM7 6h8v2H7z" /></svg>
                </Pill>
                <Pill $w={26} aria-label="Next locator">
                  <svg width="16" height="14"><path d="M15 7L7 0V14ZM0 6h8v2H0z" /></svg>
                </Pill>
                <Pill $w={46} $square $before={14} aria-label="Automation mode">
                  <svg width="14" height="14"><circle cx="3" cy="11" r="3" /><circle cx="11" cy="3" r="3" /><path d="M3 11l8-8" {...stroke} /></svg>
                </Pill>
                <Pill $w={46} $square aria-label="Lock envelopes">
                  <svg width="14" height="14"><path d="M0 6h14v8H0z" /><path d="M3 7V5a4 4 0 0 1 8 0v2" {...stroke} /></svg>
                </Pill>
              </SideRow>
            </SideControls>
            <SideBody>
              <Column $w={196}>
                {HEADS.map((t) => t.children ? (
                  <GroupBox key={t.name} $color={t.color}>
                    <TrackHead t={t} />
                    <Children>{t.children.map((c) => <TrackHead key={c.name} t={c} />)}</Children>
                  </GroupBox>
                ) : <TrackHead key={t.name} t={t} />)}
              </Column>
              <Column $w={26}>
                {flat.map((t) => (
                  <MeterBox key={t.name} $h={t.h} $before={t.before} $lit={t.name === "Synths"}><i /><i /><i /><i /></MeterBox>
                ))}
              </Column>
            </SideBody>
          </Side>

          <Edge>
            <ScrollThumb />
            {["I·O", "R", "M", "D"].map((l) => <Letter key={l} $size={26} $bg="#192025">{l}</Letter>)}
          </Edge>
          <Notch>
            <Round $size={38} $bg={C.panel} aria-label="Arrangement view">
              <svg width="22" height="20" fill="#fccb3f"><path d="M0 0h22v4H0zM0 8h22v4H0zM0 16h22v4H0z" /></svg>
            </Round>
            <Round $size={38} $bg={C.panel} aria-label="Session view">
              <svg width="20" height="22" fill="#8f8f8f"><path d="M0 0h4v22H0zM8 0h4v22H8zM16 0h4v22h-4z" /></svg>
            </Round>
          </Notch>
        </Panel>
      </Workspace>
    </Shell>
  );
}
